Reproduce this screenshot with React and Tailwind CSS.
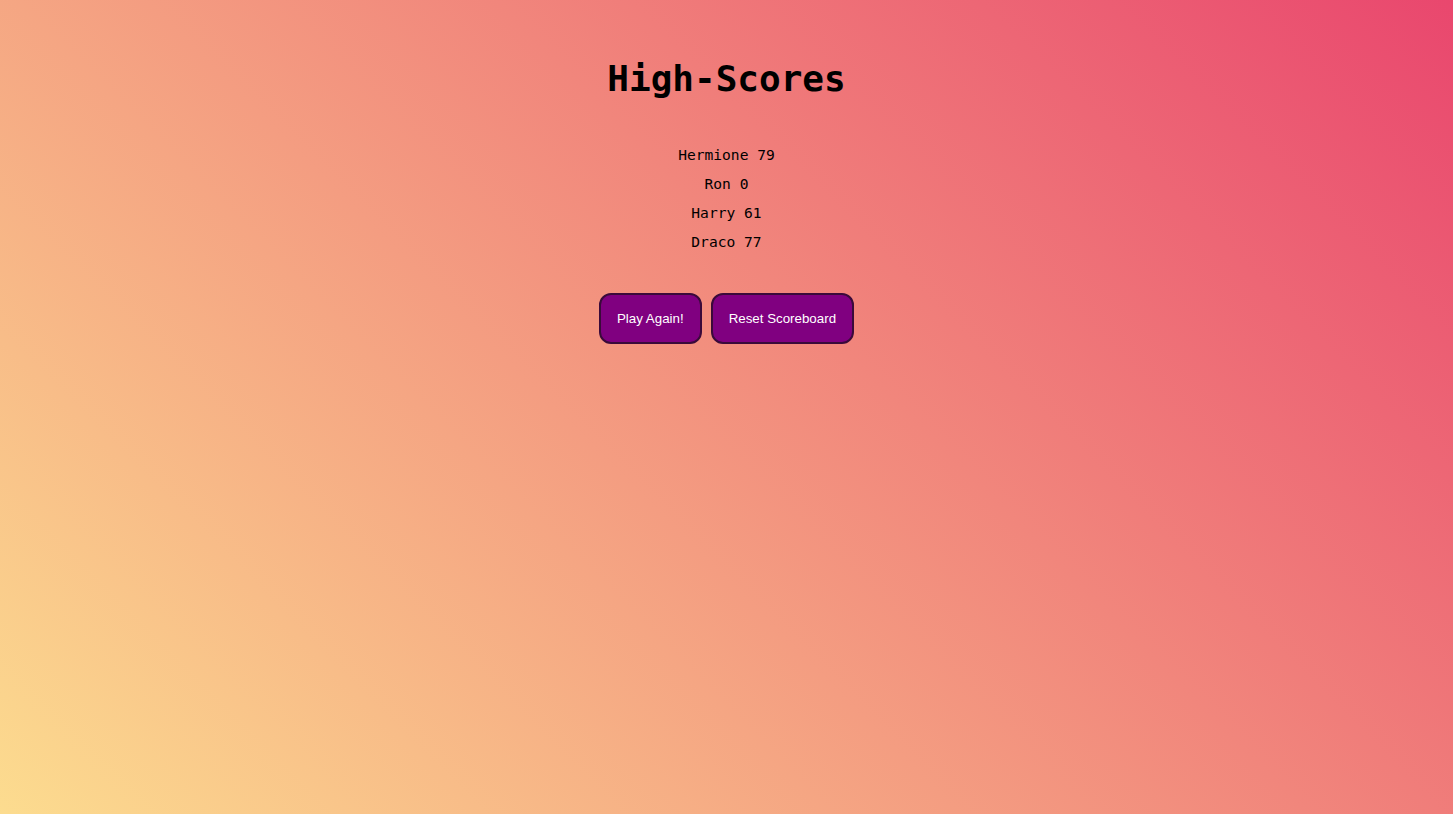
import React from "react";

const scores = [
  { name: "Hermione", score: 79 },
  { name: "Ron", score: 0 },
  { name: "Harry", score: 61 },
  { name: "Draco", score: 77 },
];

export default function App() {
  return (
    <div className="min-h-screen w-full bg-[linear-gradient(45deg,#fcdc8f,#e9476e)] flex flex-col items-center font-['DejaVu_Sans_Mono',monospace] text-black">
      {/* Title */}
      <h1 className="mt-[55px] text-[36px] font-bold leading-[48px]">High-Scores</h1>

      {/* Scores list */}
      <ul className="mt-[42px] flex flex-col items-center gap-[9px] text-[14.6px] leading-[20px]">
        {scores.map((s) => (
          <li key={s.name}>
            {s.name} {s.score}
          </li>
        ))}
      </ul>

      {/* Buttons */}
      <div className="mt-[41px] flex gap-[9px] font-['Liberation_Sans',Arial,sans-serif]">
        <button className="h-[51px] px-[16px] rounded-[12px] border-2 border-[#3a0a3a] bg-[#800080] text-white text-[13.33px]">
          Play Again!
        </button>
        <button className="h-[51px] px-[16px] rounded-[12px] border-2 border-[#3a0a3a] bg-[#800080] text-white text-[13.33px]">
          Reset Scoreboard
        </button>
      </div>
    </div>
  );
}
